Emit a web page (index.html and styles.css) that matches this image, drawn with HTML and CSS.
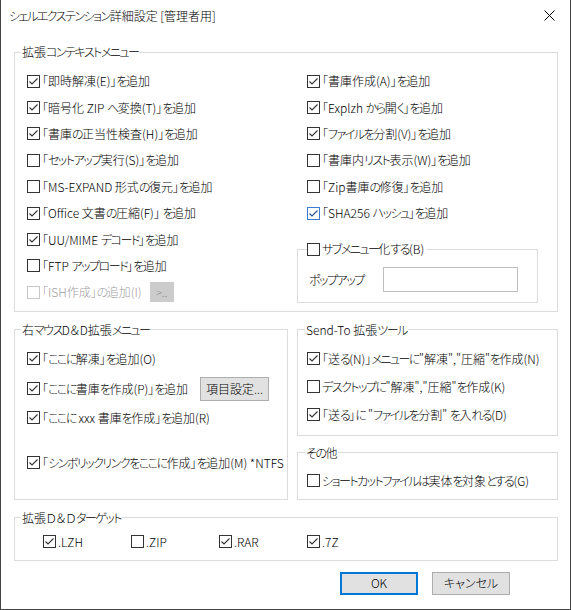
FILE: index.html
```html
<!DOCTYPE html>
<html lang="ja">
<head>
<meta charset="utf-8">
<title>シェルエクステンション詳細設定 [管理者用]</title>
<link rel="stylesheet" href="styles.css">
</head>
<body>
<div class="window">
  <div class="titlebar">
    <span class="title"><span class="k">シェルエクステンション</span>詳細設定 [管理者用]</span>
    <svg class="close" width="11" height="11" viewBox="0 0 11 11"><path d="M0.5 0.5 L10.5 10.5 M10.5 0.5 L0.5 10.5" stroke="#000" stroke-width="1" fill="none"/></svg>
  </div>
  <div class="content">
    <fieldset class="group g-context">
      <legend>拡張<span class="k">コンテキストメニュー</span></legend>
      <div class="ctx-cols">
        <div class="col-left">
          <div class="row"><span class="box on"><svg viewBox="0 0 11 11"><path d="M1.5 5.5 L4 8 L9.5 2.5"/></svg></span><span>「即時解凍(E)」<span class="k">を</span>追加</span></div>
          <div class="row"><span class="box on"><svg viewBox="0 0 11 11"><path d="M1.5 5.5 L4 8 L9.5 2.5"/></svg></span><span>「暗号化 ZIP <span class="k">へ</span>変換(T)」<span class="k">を</span>追加</span></div>
          <div class="row"><span class="box on"><svg viewBox="0 0 11 11"><path d="M1.5 5.5 L4 8 L9.5 2.5"/></svg></span><span>「書庫<span class="k">の</span>正当性検査(H)」<span class="k">を</span>追加</span></div>
          <div class="row"><span class="box"></span><span>「<span class="k">セットアップ</span>実行(S)」<span class="k">を</span>追加</span></div>
          <div class="row"><span class="box"></span><span>「MS-EXPAND 形式<span class="k">の</span>復元」<span class="k">を</span>追加</span></div>
          <div class="row"><span class="box on"><svg viewBox="0 0 11 11"><path d="M1.5 5.5 L4 8 L9.5 2.5"/></svg></span><span>「Office 文書<span class="k">の</span>圧縮(F)」 <span class="k">を</span>追加</span></div>
          <div class="row"><span class="box on"><svg viewBox="0 0 11 11"><path d="M1.5 5.5 L4 8 L9.5 2.5"/></svg></span><span>「UU/MIME <span class="k">デコード</span>」<span class="k">を</span>追加</span></div>
          <div class="row"><span class="box"></span><span>「FTP <span class="k">アップロード</span>」<span class="k">を</span>追加</span></div>
          <div class="row disabled"><span class="box"></span><span>「ISH作成」<span class="k">の</span>追加(I)</span><span class="mini-btn">&gt;..</span></div>
        </div>
        <div class="col-right">
          <div class="row"><span class="box on"><svg viewBox="0 0 11 11"><path d="M1.5 5.5 L4 8 L9.5 2.5"/></svg></span><span>「書庫作成(A)」<span class="k">を</span>追加</span></div>
          <div class="row"><span class="box on"><svg viewBox="0 0 11 11"><path d="M1.5 5.5 L4 8 L9.5 2.5"/></svg></span><span>「Explzh <span class="k">から</span>開<span class="k">く</span>」<span class="k">を</span>追加</span></div>
          <div class="row"><span class="box on"><svg viewBox="0 0 11 11"><path d="M1.5 5.5 L4 8 L9.5 2.5"/></svg></span><span>「<span class="k">ファイルを</span>分割(V)」<span class="k">を</span>追加</span></div>
          <div class="row"><span class="box"></span><span>「書庫内<span class="k">リスト</span>表示(W)」<span class="k">を</span>追加</span></div>
          <div class="row"><span class="box"></span><span>「Zip書庫<span class="k">の</span>修復」<span class="k">を</span>追加</span></div>
          <div class="row"><span class="box on hover"><svg viewBox="0 0 11 11"><path d="M1.5 5.5 L4 8 L9.5 2.5"/></svg></span><span>「SHA256 <span class="k">ハッシュ</span>」<span class="k">を</span>追加</span></div>
          <fieldset class="subgroup">
            <legend><span class="box"></span><span><span class="k">サブメニュー</span>化<span class="k">する</span>(B)</span></legend>
            <div class="popup-row"><span class="popup-label k">ポップアップ</span><span class="textbox"></span></div>
          </fieldset>
        </div>
      </div>
    </fieldset>

    <div class="mid">
      <fieldset class="group g-mouse">
        <legend>右<span class="k">マウス</span>D＆D拡張<span class="k">メニュー</span></legend>
        <div class="row r1"><span class="box on"><svg viewBox="0 0 11 11"><path d="M1.5 5.5 L4 8 L9.5 2.5"/></svg></span><span>「<span class="k">ここに</span>解凍」<span class="k">を</span>追加(O)</span></div>
        <div class="row r2"><span class="box on"><svg viewBox="0 0 11 11"><path d="M1.5 5.5 L4 8 L9.5 2.5"/></svg></span><span class="fixed-label">「<span class="k">ここに</span>書庫<span class="k">を</span>作成(P)」<span class="k">を</span>追加</span><span class="btn btn-items">項目設定...</span></div>
        <div class="row r3"><span class="box on"><svg viewBox="0 0 11 11"><path d="M1.5 5.5 L4 8 L9.5 2.5"/></svg></span><span>「<span class="k">ここに</span> xxx 書庫<span class="k">を</span>作成」<span class="k">を</span>追加(R)</span></div>
        <div class="row r4"><span class="box on"><svg viewBox="0 0 11 11"><path d="M1.5 5.5 L4 8 L9.5 2.5"/></svg></span><span>「<span class="k">シンボリックリンクをここに</span>作成」<span class="k">を</span>追加(M) *NTFS</span></div>
      </fieldset>
      <div class="mid-right">
        <fieldset class="group g-sendto">
          <legend>Send-To 拡張<span class="k">ツール</span></legend>
          <div class="row"><span class="box on"><svg viewBox="0 0 11 11"><path d="M1.5 5.5 L4 8 L9.5 2.5"/></svg></span><span>「送<span class="k">る</span>(N)」<span class="k">メニューに</span>"解凍","圧縮"<span class="k">を</span>作成(N)</span></div>
          <div class="row"><span class="box"></span><span><span class="k">デスクトップに</span>"解凍","圧縮"<span class="k">を</span>作成(K)</span></div>
          <div class="row"><span class="box on"><svg viewBox="0 0 11 11"><path d="M1.5 5.5 L4 8 L9.5 2.5"/></svg></span><span>「送<span class="k">る</span>」<span class="k">に</span> "<span class="k">ファイルを</span>分割" <span class="k">を</span>入<span class="k">れる</span>(D)</span></div>
        </fieldset>
        <fieldset class="group g-other">
          <legend><span class="k">その</span>他</legend>
          <div class="row"><span class="box"></span><span><span class="k">ショートカットファイルは</span>実体<span class="k">を</span>対象<span class="k">とする</span>(G)</span></div>
        </fieldset>
      </div>
    </div>

    <fieldset class="group g-target">
      <legend>拡張Ｄ＆Ｄ<span class="k">ターゲット</span></legend>
      <div class="targets">
        <div class="row"><span class="box on"><svg viewBox="0 0 11 11"><path d="M1.5 5.5 L4 8 L9.5 2.5"/></svg></span><span>.LZH</span></div>
        <div class="row"><span class="box"></span><span>.ZIP</span></div>
        <div class="row"><span class="box on"><svg viewBox="0 0 11 11"><path d="M1.5 5.5 L4 8 L9.5 2.5"/></svg></span><span>.RAR</span></div>
        <div class="row"><span class="box on"><svg viewBox="0 0 11 11"><path d="M1.5 5.5 L4 8 L9.5 2.5"/></svg></span><span>.7Z</span></div>
      </div>
    </fieldset>

    <div class="buttons">
      <span class="btn btn-ok">OK</span>
      <span class="btn btn-cancel">キャンセル</span>
    </div>
  </div>
</div>
</body>
</html>
```

FILE: styles.css
```css
* { box-sizing: border-box; }

body {
  margin: 0;
  background: #fff;
  color: #000;
  font-family: "Noto Sans CJK JP", "Noto Sans", sans-serif;
  font-size: 12px;
  font-weight: 300;
  line-height: 16px;
  font-feature-settings: "palt";
}

.k { letter-spacing: -1.5px; }

.window {
  width: 571px;
  height: 610px;
  background: #fff;
  border: 1px solid #444;
  border-top: none;
}

.titlebar {
  height: 31px;
  display: flex;
  align-items: center;
  justify-content: space-between;
  padding: 0 15px 0 8px;
}

.close { display: block; }

.content {
  padding: 13px 12px 0 13px;
}

fieldset { margin: 0; min-width: 0; }

.group {
  border: 1px solid #dcdcdc;
  padding: 0;
}

.group > legend {
  padding: 0 1px;
  line-height: 16px;
  height: 16px;
}

.row {
  display: flex;
  align-items: center;
  white-space: nowrap;
}

.box {
  flex: none;
  width: 13px;
  height: 13px;
  border: 1px solid #333;
  background: #fff;
  margin-right: 2px;
  display: inline-flex;
}

.box svg {
  width: 11px;
  height: 11px;
  fill: none;
  stroke: #333;
  stroke-width: 1.1;
}

.box.hover { border-color: #3d7bd0; }
.box.hover svg { stroke: #24508f; }

.disabled { color: #a0a0a0; }
.disabled .box { border-color: #c8c8c8; }

.mini-btn {
  margin-left: 8px;
  width: 24px;
  height: 20px;
  background: #cccccc;
  color: #8a8a8a;
  font-size: 11px;
  display: inline-flex;
  align-items: center;
  justify-content: center;
}

/* context menu group */
.g-context { padding: 8px 0 5px 12px; }
.g-context > legend { margin-left: -6px; }

.ctx-cols {
  display: grid;
  grid-template-columns: 270px 1fr;
}

.col-left .row,
.col-right > .row { height: 26.4px; }

.col-right > .row { padding-left: 10px; }

.subgroup {
  width: 241px;
  margin-top: 15px;
  border: 1px solid #dcdcdc;
  padding: 10px 0 10px 11px;
}

.subgroup > legend {
  margin-left: -2px;
  padding: 0 3px 0 0;
  height: 16px;
  display: flex;
  align-items: center;
}

.popup-row {
  display: flex;
  align-items: center;
  height: 25px;
}

.popup-label { width: 74px; }

.textbox {
  width: 135px;
  height: 25px;
  border: 1px solid #bfbfbf;
  background: #fff;
}

/* middle */
.mid {
  display: flex;
  gap: 9px;
  margin-top: 10px;
}

.g-mouse {
  width: 274px;
  padding: 8px 0 0 12px;
}
.g-mouse > legend { margin-left: -6px; }

.g-mouse .r1 { height: 26px; }
.g-mouse .r2 { height: 34px; }
.g-mouse .r3 { height: 24px; }
.g-mouse .r4 { height: 26px; margin-top: 20px; }

.fixed-label { width: 158px; }

.btn {
  display: inline-flex;
  align-items: center;
  justify-content: center;
  background: #e1e1e1;
  border: 1px solid #adadad;
}

.btn-items {
  width: 69px;
  height: 24px;
}

.mid-right {
  width: 261px;
  display: flex;
  flex-direction: column;
  gap: 9px;
}

.g-sendto { padding: 7px 0 6px 9px; }
.g-sendto > legend { margin-left: -2px; }
.g-sendto .row { height: 28px; }

.g-other { padding: 7px 0 5px 9px; }
.g-other > legend { margin-left: -2px; }
.g-other .row { height: 26px; }

/* targets */
.g-target {
  margin-top: 10px;
  padding: 3px 0 5px 28px;
}
.g-target > legend { margin-left: -22px; }

.targets { display: flex; }
.targets .row { width: 88px; height: 26px; }

/* buttons */
.buttons {
  display: flex;
  justify-content: flex-end;
  gap: 14px;
  margin-top: 11px;
  padding-right: 48px;
}

.btn-ok,
.btn-cancel {
  width: 78px;
  height: 23px;
}

.btn-ok { border: 2px solid #0078d7; }
```
